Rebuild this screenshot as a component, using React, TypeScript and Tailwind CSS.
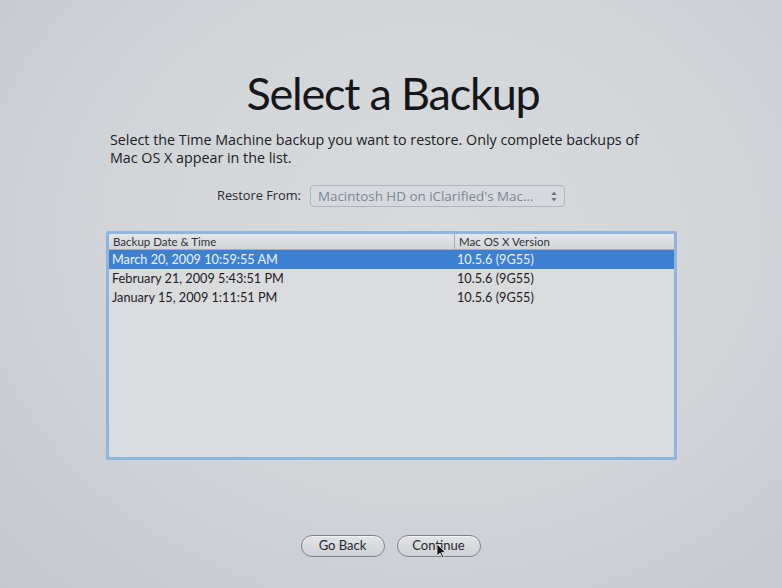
const rows = [
  { date: 'March 20, 2009 10:59:55 AM', version: '10.5.6 (9G55)', selected: true },
  { date: 'February 21, 2009 5:43:51 PM', version: '10.5.6 (9G55)', selected: false },
  { date: 'January 15, 2009 1:11:51 PM', version: '10.5.6 (9G55)', selected: false },
]

export default function App() {
  return (
    <div className="w-[782px] h-[588px] relative overflow-hidden flex flex-col bg-[radial-gradient(ellipse_at_55%_40%,#d8dadb_0%,#d3d6d9_45%,#c4c8d0_100%)] text-[#1c1d22] font-['Lato','Open_Sans',sans-serif]">
      <h1 className="mt-[65px] text-center text-[45px] leading-[56px] tracking-[-1.2px] text-[#15161a] ml-[4px]">
        Select a Backup
      </h1>

      <p className="ml-[110px] mt-[10px] w-[600px] font-['Open_Sans',sans-serif] text-[14.3px] leading-[18px] text-[#202126]">
        Select the Time Machine backup you want to restore. Only complete backups of
        <br />
        Mac OS X appear in the list.
      </p>

      <div className="mt-[18px] flex items-center ml-[217px] gap-[9px] font-['Open_Sans',sans-serif]">
        <span className="text-[12.8px] text-[#2a2b30]">Restore From:</span>
        <div className="w-[255px] h-[22px] rounded-[4px] border border-[#aeb6c2] bg-[#d6dadf] flex items-center pl-[7px] pr-[7px]">
          <span className="flex-1 text-[13.4px] text-[#7b8595] truncate">Macintosh HD on iClarified's Mac...</span>
          {/* stepper arrows */}
          <svg width="6" height="11" viewBox="0 0 6 11" className="text-[#6d7480]">
            <path d="M3 0.5 L5.6 4 L0.4 4 Z" fill="currentColor" />
            <path d="M3 10.5 L5.6 7 L0.4 7 Z" fill="currentColor" />
          </svg>
        </div>
      </div>

      <div className="ml-[106px] mt-[24px] w-[571px] h-[229px] border-[3px] border-[#8fb5dc] rounded-[2px] bg-[#d9dbdc] flex flex-col">
        <div className="h-[16px] flex text-[11.5px] leading-[16px] text-[#30323a] border-b border-[#a9adb4] bg-[linear-gradient(#e4e6e8,#d3d6d9)]">
          <div className="w-[345px] pl-[4px]">Backup Date &amp; Time</div>
          <div className="flex-1 pl-[4px] border-l border-[#a9adb4]">Mac OS X Version</div>
        </div>
        {rows.map((r) => (
          <div
            key={r.date}
            className={`h-[19px] flex items-center text-[12.7px] ${r.selected ? 'bg-[#3d7fd0] text-[#eef3fb]' : 'text-[#1f2026]'}`}
          >
            <div className="w-[345px] pl-[3px]">{r.date}</div>
            <div className="flex-1 pl-[3px]">{r.version}</div>
          </div>
        ))}
      </div>

      <div className="mt-[75px] flex justify-center gap-[12px] ml-[-1px]">
        <button className="w-[84px] h-[22px] rounded-full border border-[#7d828b] bg-[linear-gradient(#e2e4e6,#cfd2d6)] text-[13px] text-[#26272c] shadow-[inset_0_1px_0_#f2f3f4]">
          Go Back
        </button>
        <button className="w-[84px] h-[22px] rounded-full border border-[#7d828b] bg-[linear-gradient(#e2e4e6,#cfd2d6)] text-[13px] text-[#26272c] shadow-[inset_0_1px_0_#f2f3f4]">
          Continue
        </button>
      </div>

      <svg className="absolute left-[436px] top-[543px]" width="10" height="16" viewBox="0 0 10 16">
        <path d="M1 1 L1 13 L4 10 L6.5 15 L8 14.3 L5.6 9.4 L9.5 9.4 Z" fill="#111" stroke="#e8e8e8" strokeWidth="0.8" />
      </svg>
    </div>
  )
}
